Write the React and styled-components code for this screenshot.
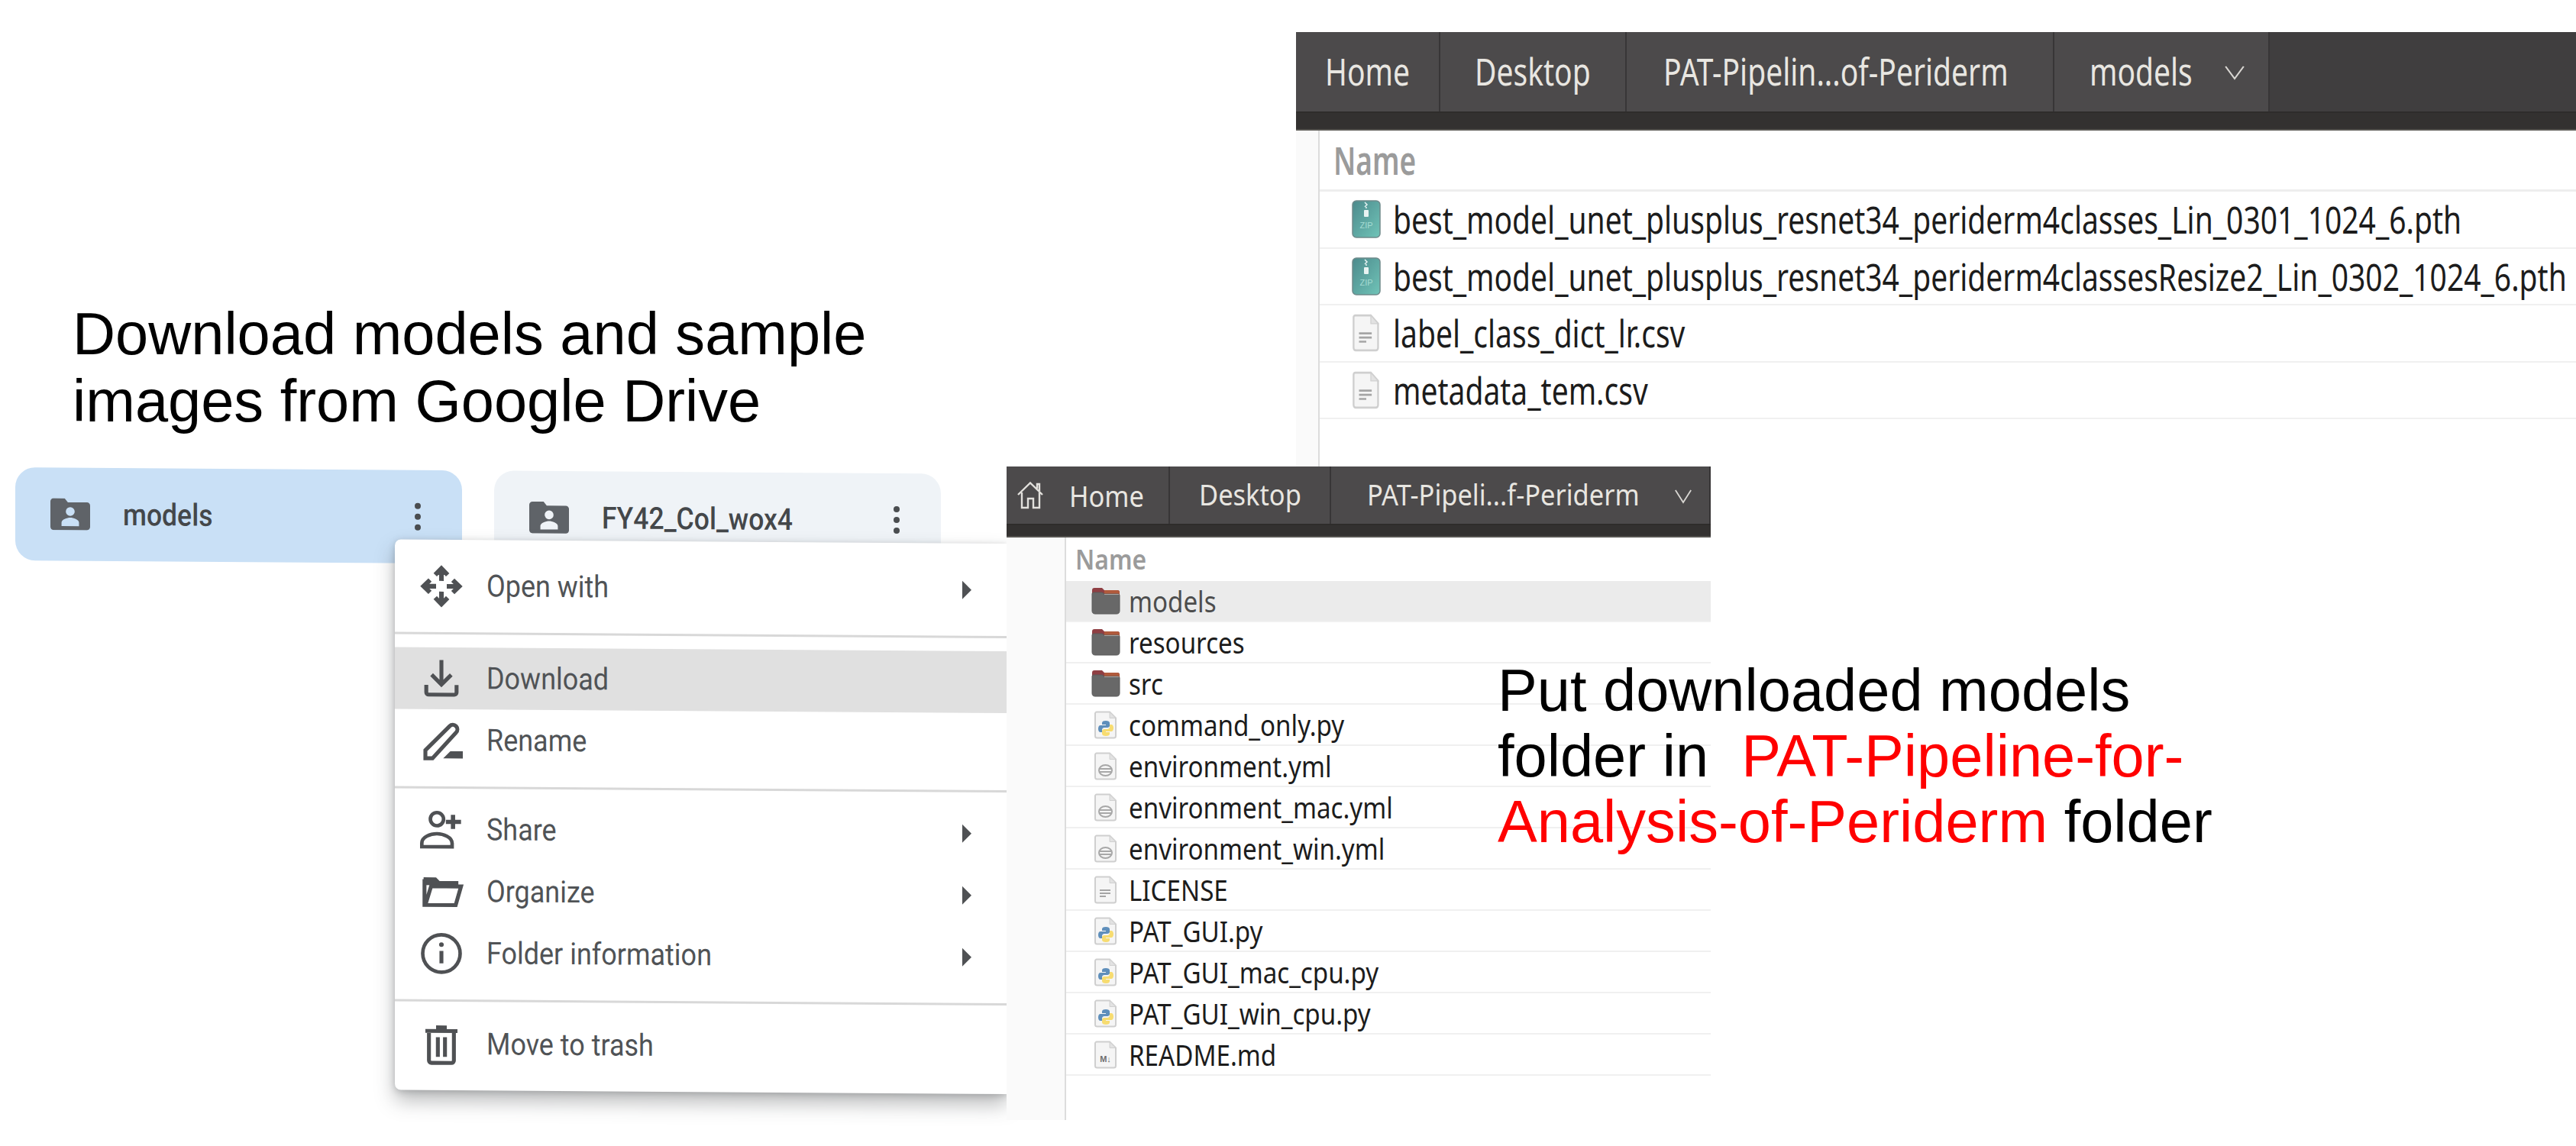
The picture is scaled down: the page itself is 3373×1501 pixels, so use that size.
import React from 'react';
import styled, { createGlobalStyle } from 'styled-components';

const GlobalStyle = createGlobalStyle`
  html, body {
    margin: 0;
    padding: 0;
    background: #fff;
  }
  #root {
    width: 3373px;
    height: 1501px;
  }
`;

const Canvas = styled.div`
  position: relative;
  width: 3373px;
  height: 1501px;
  overflow: hidden;
  background: #fff;
  font-family: "Liberation Sans", Arial, sans-serif;
`;

const Squeezed = styled.span`
  display: inline-block;
  white-space: nowrap;
  transform: scaleX(${(p) => p.$sx || 1});
  transform-origin: left center;
`;

const Heading = styled.div`
  position: absolute;
  left: 95px;
  top: 393px;
  font-size: 77.6px;
  line-height: 88px;
  color: #000;
  white-space: nowrap;
`;

const Note = styled.div`
  position: absolute;
  left: 1961px;
  top: 861px;
  z-index: 5;
  font-size: 77.6px;
  line-height: 86px;
  color: #000;
  white-space: nowrap;
`;

const Red = styled.span`
  color: #ff0000;
`;

/* nautilus windows */
const TopWindow = styled.div`
  position: absolute;
  left: 1697px;
  top: 42px;
  right: 0;
  height: 570px;
  display: flex;
  flex-direction: column;
  font-family: "Noto Sans", sans-serif;
`;

const BottomWindow = styled.div`
  position: absolute;
  left: 1318px;
  top: 611px;
  width: 922px;
  height: 856px;
  z-index: 3;
  display: flex;
  flex-direction: column;
  background: #fff;
  font-family: "Noto Sans", sans-serif;
`;

const TabBar = styled.div`
  display: flex;
  height: ${(p) => p.$h}px;
  flex: none;
  background: #403e3f;
`;

const Tab = styled.div`
  display: flex;
  align-items: center;
  width: ${(p) => p.$w}px;
  flex: none;
  box-sizing: border-box;
  padding: 0 0 3px ${(p) => p.$pad}px;
  background: #4c4a4b;
  border-right: 2px solid #383637;
  color: #e8e6e1;
  font-size: ${(p) => p.$size}px;
  &:last-child {
    position: relative;
  }
`;

const Chevron = styled.svg`
  position: absolute;
  right: ${(p) => p.$right}px;
  top: 50%;
  margin-top: -9px;
  width: ${(p) => p.$w}px;
  height: 20px;
`;

const DarkStrip = styled.div`
  height: ${(p) => p.$h}px;
  flex: none;
  box-sizing: border-box;
  background: #333130;
  border-top: 2px solid #2e2c2b;
  border-bottom: 2px solid #55534f;
`;

const Body = styled.div`
  flex: 1;
  display: flex;
  min-height: 0;
`;

const SideStrip = styled.div`
  width: ${(p) => p.$w}px;
  flex: none;
  background: #fafafa;
  border-right: 2px solid #dcdcdc;
`;

const FileList = styled.div`
  flex: 1;
  min-width: 0;
  display: flex;
  flex-direction: column;
`;

const ColumnHead = styled.div`
  height: ${(p) => p.$h}px;
  flex: none;
  box-sizing: border-box;
  display: flex;
  align-items: center;
  padding-left: ${(p) => p.$pad}px;
  color: #9b9b9b;
  font-size: ${(p) => p.$size}px;
  font-weight: 600;
  border-bottom: ${(p) => (p.$line ? '3px solid #eeeeee' : 'none')};
`;

const FileRow = styled.div`
  height: ${(p) => p.$h}px;
  flex: none;
  box-sizing: border-box;
  display: flex;
  align-items: center;
  padding-left: ${(p) => p.$pad}px;
  gap: ${(p) => p.$gap}px;
  font-size: ${(p) => p.$size}px;
  color: ${(p) => (p.$selected ? '#4d4d4d' : '#1c1c1c')};
  background: ${(p) => (p.$selected ? '#ebebeb' : 'transparent')};
  border-bottom: 2px solid #f0f0f0;
  overflow: hidden;
`;

const FileIcon = styled.svg`
  flex: none;
  width: ${(p) => p.$w}px;
  height: ${(p) => p.$h}px;
`;

const HomeIcon = styled.svg`
  flex: none;
  width: 36px;
  height: 36px;
  margin-right: 33px;
`;

const HomeTab = styled(Tab)`
  padding-left: 13px;
`;

/* google drive part, the photo is slightly sheared */
const DriveArea = styled.div`
  position: absolute;
  left: 20px;
  top: 612px;
  width: 1299px;
  transform: skewY(0.4deg);
  transform-origin: left top;
  font-family: Roboto, sans-serif;
`;

const CardRow = styled.div`
  display: flex;
  gap: 42px;
`;

const Card = styled.div`
  display: flex;
  align-items: center;
  width: 585px;
  height: 122px;
  box-sizing: border-box;
  padding: 0 ${(p) => p.$padRight}px 0 46px;
  border-radius: 26px;
  background: ${(p) => (p.$active ? '#c9e0f6' : '#eff3f7')};
  color: #44474a;
  font-size: 40px;
  font-weight: 500;
`;

const CardIcon = styled.svg`
  width: 52px;
  height: 42px;
  flex: none;
  margin-right: 43px;
`;

const CardName = styled.div`
  flex: 1;
  min-width: 0;
`;

const Kebab = styled.svg`
  width: 12px;
  height: 38px;
  flex: none;
`;

const Menu = styled.div`
  position: absolute;
  left: 497px;
  top: 91px;
  width: 802px;
  background: #fff;
  border-radius: 8px 0 0 8px;
  box-shadow: 0 14px 26px rgba(60, 64, 67, 0.35), 0 2px 8px rgba(60, 64, 67, 0.25);
`;

const MenuGroup = styled.div`
  padding: ${(p) => p.$top}px 0 20px;
  border-bottom: 3px solid #d8d8d8;
  margin-bottom: -3px;
  &:last-child {
    border-bottom: none;
    margin-bottom: 0;
  }
`;

const MenuItem = styled.div`
  display: flex;
  align-items: center;
  height: 81px;
  padding: 0 46px 0 30px;
  background: ${(p) => (p.$active ? '#e0e0e0' : 'transparent')};
  color: #505356;
  font-size: 40px;
`;

const MenuIcon = styled.svg`
  width: 62px;
  height: 56px;
  flex: none;
  margin-right: 28px;
`;

const MenuText = styled.div`
  flex: 1;
  min-width: 0;
`;

const SubArrow = styled.svg`
  width: 14px;
  height: 26px;
  flex: none;
`;

const GREY = '#4f5154';

const icons = {
  open: (
    <g fill="none" stroke={GREY} strokeWidth="2.6">
      <path d="M8.5 5.6 12 2l3.5 3.6M12 2.6V9M8.5 18.4 12 22l3.5-3.6M12 21.4V15M5.6 8.5 2 12l3.6 3.5M2.6 12H9M18.4 8.5 22 12l-3.6 3.5M21.4 12H15" />
    </g>
  ),
  download: (
    <g fill="none" stroke={GREY} strokeWidth="2.2">
      <path d="M12 1.5V15M6.5 9.8 12 15.3l5.5-5.5M3.5 15.5v4.2c0 .8.6 1.3 1.3 1.3h14.4c.7 0 1.3-.5 1.3-1.3v-4.2" />
    </g>
  ),
  rename: (
    <g>
      <path d="M3 22v-4.5L16.6 3.9c1-1 2.6-1 3.6 0s1 2.6 0 3.6L7 22H3z" fill="none" stroke={GREY} strokeWidth="2.2" />
      <path d="M13 22l4-4h7v4z" fill={GREY} />
    </g>
  ),
  share: (
    <g fill="none" stroke={GREY} strokeWidth="2">
      <circle cx="9.5" cy="6" r="3.7" />
      <path d="M1 21.5v-2c0-3.5 5-5.3 8.500-5.300s8.500 1.800 8.500 5.300v2z" />
      <path d="M18.500 3.500v8M14.500 7.500h8.500" strokeWidth="2.400" />
    </g>
  ),
  organize: (
    <g>
      <path d="M2 4h7l2 2h10.500v2.400H2z" fill={GREY} />
      <path d="M2.500 5v14.500h17.500l3-10.500H6.200L3 19.500" fill="none" stroke={GREY} strokeWidth="2.200" />
    </g>
  ),
  info: (
    <g fill="none" stroke={GREY} strokeWidth="2">
      <circle cx="12" cy="12" r="10.500" />
      <path d="M12 10.500v7" strokeWidth="2.200" />
      <circle cx="12" cy="7" r="1.300" fill={GREY} stroke="none" />
    </g>
  ),
  trash: (
    <g fill="none" stroke={GREY} strokeWidth="2.200">
      <path d="M3 4.500h18M9 2.500h6M5 4.500V21c0 .8.6 1.400 1.400 1.400h11.200c.8 0 1.400-.6 1.400-1.400V4.500M10 8v11M14 8v11" />
    </g>
  ),
};

const SharedFolder = () => (
  <CardIcon viewBox="0 0 25 20">
    <path
      d="M2 0h7l2 2.500h12c1.100 0 2 .9 2 2V18c0 1.100-.9 2-2 2H2c-1.100 0-2-.9-2-2V2C0 .9.900 0 2 0zm10.500 5.500a2.800 2.800 0 1 0 0 5.600 2.800 2.800 0 0 0 0-5.600zM7 17.500h11v-2.200c0-2-3.600-3.100-5.500-3.100S7 13.300 7 15.300z"
      fill="#5f6368"
      fillRule="evenodd"
    />
  </CardIcon>
);

const Dots = () => (
  <Kebab viewBox="0 0 12 38">
    <circle cx="6" cy="5" r="4" fill="#4a4d50" />
    <circle cx="6" cy="19" r="4" fill="#4a4d50" />
    <circle cx="6" cy="33" r="4" fill="#4a4d50" />
  </Kebab>
);

const Sub = () => (
  <SubArrow viewBox="0 0 14 26">
    <path d="M1 1l12 12L1 25z" fill="#4f5154" />
  </SubArrow>
);

const DriveItem = ({ icon, label, sub, active }) => (
  <MenuItem $active={active}>
    <MenuIcon viewBox="-1 0 26 24" preserveAspectRatio="xMidYMid meet">
      {icons[icon]}
    </MenuIcon>
    <MenuText>
      <Squeezed $sx={0.899}>{label}</Squeezed>
    </MenuText>
    {sub && <Sub />}
  </MenuItem>
);

const Page = ({ children }) => (
  <>
    <path d="M4 1.500h17L29 9.500V33a2.500 2.500 0 0 1-2.500 2.500h-22A2.500 2.500 0 0 1 2 33V3.500a2 2 0 0 1 2-2z" fill="#f5f5f5" stroke="#cfcfcf" strokeWidth="2" />
    <path d="M21 1.500V9.500H29z" fill="#e2e2e2" stroke="#d0d0d0" strokeWidth="1" />
    {children}
  </>
);

const fileKinds = {
  text: (
    <Page>
      <path d="M8 19h14M8 23h14M8 27h8" stroke="#a5a5a5" strokeWidth="2" />
    </Page>
  ),
  python: (
    <Page>
      <path d="M16 13c-3.500 0-5 1-5 3v2h5v1H9c-2 0-3 2-3 4.500S7 28 9 28h2v-3c0-2 1.500-3 3-3h4c1.500 0 3-1 3-2.500V16c0-2-2-3-5-3z" fill="#5f8fbb" />
      <path d="M16 33c3.500 0 5-1 5-3v-2h-5v-1h7c2 0 3-2 3-4.500S25 18 23 18h-2v3c0 2-1.500 3-3 3h-4c-1.500 0-3 1-3 2.500V30c0 2 2 3 5 3z" fill="#f7dc70" />
    </Page>
  ),
  yaml: (
    <Page>
      <ellipse cx="15.500" cy="24" rx="8.500" ry="7" fill="none" stroke="#a8a8a8" strokeWidth="2" />
      <path d="M8 22h15M8 26h15" stroke="#a8a8a8" strokeWidth="2" />
    </Page>
  ),
  markdown: (
    <Page>
      <text x="15.500" y="28" textAnchor="middle" fontSize="11" fontWeight="700" fontFamily="Liberation Sans, sans-serif" fill="#6e6e6e">M↓</text>
    </Page>
  ),
};

const File = ({ kind }) => (
  <FileIcon $w={32} $h={37} viewBox="0 0 32 37">
    {fileKinds[kind]}
  </FileIcon>
);

const BigFile = () => (
  <FileIcon $w={38} $h={50} viewBox="0 0 32 37" preserveAspectRatio="none">
    {fileKinds.text}
  </FileIcon>
);

const ZipIcon = () => (
  <FileIcon $w={38} $h={50} viewBox="0 0 38 50">
    <defs>
      <linearGradient id="zipFill" x1="0" y1="0" x2="1" y2="1">
        <stop offset="0" stopColor="#4c8a8c" />
        <stop offset="1" stopColor="#70c4b8" />
      </linearGradient>
    </defs>
    <rect x="1" y="1" width="36" height="48" rx="5" fill="url(#zipFill)" stroke="#6f8a8b" strokeWidth="1.500" />
    <path d="M17 3l3 3-3 3M19 9v2" fill="none" stroke="#e6f2f2" strokeWidth="1.500" />
    <rect x="16" y="13" width="6" height="9" rx="1" fill="#e8f3f2" />
    <text x="19" y="37" textAnchor="middle" fontSize="11" fontFamily="Liberation Sans, sans-serif" fill="#a5dcd3">ZIP</text>
  </FileIcon>
);

const FolderIcon = () => (
  <FileIcon $w={38} $h={36} viewBox="0 0 38 36">
    <path d="M4 1h10l3 3h17c2 0 3 1 3 3v8H1V4c0-2 1-3 3-3z" fill="#8f3f43" />
    <path d="M17 4h17c2 0 3 1 3 3v3H17z" fill="#b05a3c" />
    <path d="M1 9c0-1 1-2 2-2h11l3 2h18c1 0 2 1 2 2v20c0 2.500-1.500 4-4 4H5c-2.500 0-4-1.500-4-4z" fill="#686868" stroke="#5a5a5a" strokeWidth="1" />
    <path d="M17 9.500h19" stroke="#a5a5a5" strokeWidth="1" />
  </FileIcon>
);

const topFiles = [
  { icon: <ZipIcon />, name: 'best_model_unet_plusplus_resnet34_periderm4classes_Lin_0301_1024_6.pth' },
  { icon: <ZipIcon />, name: 'best_model_unet_plusplus_resnet34_periderm4classesResize2_Lin_0302_1024_6.pth' },
  { icon: <BigFile />, name: 'label_class_dict_lr.csv' },
  { icon: <BigFile />, name: 'metadata_tem.csv' },
];

const bottomFiles = [
  { icon: <FolderIcon />, name: 'models', selected: true },
  { icon: <FolderIcon />, name: 'resources' },
  { icon: <FolderIcon />, name: 'src' },
  { icon: <File kind="python" />, name: 'command_only.py', inset: 3 },
  { icon: <File kind="yaml" />, name: 'environment.yml', inset: 3 },
  { icon: <File kind="yaml" />, name: 'environment_mac.yml', inset: 3 },
  { icon: <File kind="yaml" />, name: 'environment_win.yml', inset: 3 },
  { icon: <File kind="text" />, name: 'LICENSE', inset: 3 },
  { icon: <File kind="python" />, name: 'PAT_GUI.py', inset: 3 },
  { icon: <File kind="python" />, name: 'PAT_GUI_mac_cpu.py', inset: 3 },
  { icon: <File kind="python" />, name: 'PAT_GUI_win_cpu.py', inset: 3 },
  { icon: <File kind="markdown" />, name: 'README.md', inset: 3 },
];

const ChevronDown = ({ right, w }) => (
  <Chevron $right={right} $w={w} viewBox="0 0 26 20" preserveAspectRatio="none">
    <path d="M2 2l11 16L24 2" fill="none" stroke="#d8d6d2" strokeWidth="2" />
  </Chevron>
);

const App = () => {
  return (
    <Canvas>
      <GlobalStyle />

      <Heading>
        <div>Download models and sample</div>
        <div>images from Google Drive</div>
      </Heading>

      <TopWindow>
        <TabBar $h={104}>
          <Tab $w={189} $pad={38} $size={50}><Squeezed $sx={0.78}>Home</Squeezed></Tab>
          <Tab $w={244} $pad={45} $size={50}><Squeezed $sx={0.78}>Desktop</Squeezed></Tab>
          <Tab $w={560} $pad={48} $size={50}><Squeezed $sx={0.78}>PAT-Pipelin...of-Periderm</Squeezed></Tab>
          <Tab $w={282} $pad={46} $size={50}>
            <Squeezed $sx={0.78}>models</Squeezed>
            <ChevronDown right={30} w={28} />
          </Tab>
        </TabBar>
        <DarkStrip $h={25} />
        <Body>
          <SideStrip $w={29} />
          <FileList>
            <ColumnHead $h={80} $pad={18} $size={50} $line>
              <Squeezed $sx={0.74}>Name</Squeezed>
            </ColumnHead>
            {topFiles.map((f) => (
              <FileRow key={f.name} $h={74.5} $pad={42} $gap={16} $size={50}>
                {f.icon}
                <Squeezed $sx={0.78}>{f.name}</Squeezed>
              </FileRow>
            ))}
          </FileList>
        </Body>
      </TopWindow>

      <DriveArea>
        <CardRow>
          <Card $active $padRight={52}>
            <SharedFolder />
            <CardName><Squeezed $sx={0.888}>models</Squeezed></CardName>
            <Dots />
          </Card>
          <Card $padRight={52}>
            <SharedFolder />
            <CardName><Squeezed $sx={0.888}>FY42_Col_wox4</Squeezed></CardName>
            <Dots />
          </Card>
        </CardRow>
        <Menu>
          <MenuGroup $top={20}>
            <DriveItem icon="open" label="Open with" sub />
          </MenuGroup>
          <MenuGroup $top={20}>
            <DriveItem icon="download" label="Download" active />
            <DriveItem icon="rename" label="Rename" />
          </MenuGroup>
          <MenuGroup $top={16}>
            <DriveItem icon="share" label="Share" sub />
            <DriveItem icon="organize" label="Organize" sub />
            <DriveItem icon="info" label="Folder information" sub />
          </MenuGroup>
          <MenuGroup $top={18}>
            <DriveItem icon="trash" label="Move to trash" />
          </MenuGroup>
        </Menu>
      </DriveArea>

      <BottomWindow>
        <TabBar $h={75}>
          <HomeTab $w={214} $size={38}>
            <HomeIcon viewBox="0 0 36 36" preserveAspectRatio="none">
              <path d="M2 17 18 1.500 34 17M7 14v20h8V22h7v12h8V14M27 9V3h3v9" fill="none" stroke="#e2e0dc" strokeWidth="2.400" />
            </HomeIcon>
            <Squeezed $sx={0.906}>Home</Squeezed>
          </HomeTab>
          <Tab $w={211} $pad={38} $size={38}><Squeezed $sx={0.906}>Desktop</Squeezed></Tab>
          <Tab $w={497} $pad={47} $size={38}>
            <Squeezed $sx={0.906}>PAT-Pipeli...f-Periderm</Squeezed>
            <ChevronDown right={22} w={24} />
          </Tab>
        </TabBar>
        <DarkStrip $h={18} />
        <Body>
          <SideStrip $w={76} />
          <FileList>
            <ColumnHead $h={57} $pad={12} $size={36}>
              <Squeezed $sx={0.885}>Name</Squeezed>
            </ColumnHead>
            {bottomFiles.map((f) => (
              <FileRow key={f.name} $h={54} $pad={33 + (f.inset || 0)} $gap={11 + (f.inset || 0)} $size={38} $selected={f.selected}>
                {f.icon}
                <Squeezed $sx={0.872}>{f.name}</Squeezed>
              </FileRow>
            ))}
          </FileList>
        </Body>
      </BottomWindow>

      <Note>
        <div>Put downloaded models</div>
        <div>folder in&nbsp; <Red>PAT-Pipeline-for-</Red></div>
        <div><Red>Analysis-of-Periderm</Red> folder</div>
      </Note>
    </Canvas>
  );
};

export default App;
